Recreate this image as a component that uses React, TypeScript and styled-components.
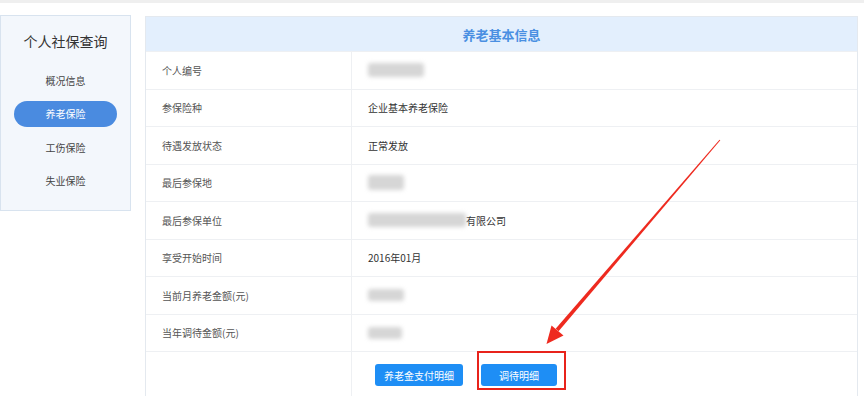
import React from "react";
import styled, { createGlobalStyle } from "styled-components";

const GlobalStyle = createGlobalStyle`
  html, body {
    margin: 0;
    padding: 0;
    background: #ffffff;
    font-family: "Noto Sans CJK SC", "Noto Sans", sans-serif;
    overflow: hidden;
  }
`;

interface IRow {
  label: string;
  value?: string;
  blur?: number;
  blurHeight?: number;
  suffix?: string;
}

const rows: IRow[] = [
  { label: "个人编号", blur: 56, blurHeight: 14 },
  { label: "参保险种", value: "企业基本养老保险" },
  { label: "待遇发放状态", value: "正常发放" },
  { label: "最后参保地", blur: 36, blurHeight: 15 },
  { label: "最后参保单位", blur: 98, blurHeight: 14, suffix: "有限公司" },
  { label: "享受开始时间", value: "2016年01月" },
  { label: "当前月养老金额(元)", blur: 36, blurHeight: 12 },
  { label: "当年调待金额(元)", blur: 34, blurHeight: 12 },
];

const menu = ["概况信息", "养老保险", "工伤保险", "失业保险"];

const App = () => {
  return (
    <>
      <GlobalStyle />
      <TopStrip />
      <Page>
        <Sidebar>
          <SideTitle>个人社保查询</SideTitle>
          <MenuList>
            {menu.map((m) => (
              <MenuItem key={m} $active={m === "养老保险"}>
                {m}
              </MenuItem>
            ))}
          </MenuList>
        </Sidebar>
        <Panel>
          <PanelHeader>养老基本信息</PanelHeader>
          {rows.map((r) => (
            <Row key={r.label}>
              <LabelCell>{r.label}</LabelCell>
              <ValueCell>
                {r.blur && <Blurred $w={r.blur} $h={r.blurHeight || 12} />}
                {r.value}
                {r.suffix}
              </ValueCell>
            </Row>
          ))}
          <ButtonRow>
            <LabelCell />
            <Buttons>
              <Button>养老金支付明细</Button>
              <Highlight>
                <Button $narrow>调待明细</Button>
              </Highlight>
            </Buttons>
          </ButtonRow>
        </Panel>
      </Page>
      <Annotation width="864" height="396" viewBox="0 0 864 396">
        <polygon points="720.3,140.3 719.5,139.7 555.6,328.7 558.6,331.3" fill="#ee2a1f" />
        <polygon points="546.5,344 563.5,335.5 551.5,325.5" fill="#ee2a1f" />
      </Annotation>
    </>
  );
};

export default App;

const TopStrip = styled.div`
  height: 3px;
  background: #efefef;
`;

const Page = styled.div`
  display: flex;
  align-items: flex-start;
  gap: 14px;
  padding-top: 12px;
`;

const Sidebar = styled.div`
  width: 129px;
  height: 194px;
  background: #f3f7fc;
  border: 1px solid #d8e3ef;
  display: flex;
  flex-direction: column;
  align-items: center;
`;

const SideTitle = styled.div`
  margin-top: 15px;
  font-size: 14px;
  line-height: 20px;
  color: #333;
`;

const MenuList = styled.div`
  margin-top: 16px;
  display: flex;
  flex-direction: column;
  gap: 7.5px;
`;

const MenuItem = styled.div<{ $active?: boolean }>`
  width: 103px;
  height: 26px;
  border-radius: 13px;
  display: flex;
  align-items: center;
  justify-content: center;
  font-size: 10px;
  color: ${(p) => (p.$active ? "#ffffff" : "#444")};
  background: ${(p) => (p.$active ? "#4a8be0" : "transparent")};
`;

const Panel = styled.div`
  width: 711px;
  margin-top: 1px;
  border: 1px solid #e4e9ef;
  border-bottom: none;
`;

const PanelHeader = styled.div`
  height: 34px;
  background: #e3effd;
  display: flex;
  align-items: center;
  justify-content: center;
  font-size: 13px;
  font-weight: 700;
  color: #4a8fe2;
`;

const Row = styled.div`
  display: grid;
  grid-template-columns: 206px 1fr;
  height: 37.5px;
  border-top: 1px solid #eef0f3;
  box-sizing: border-box;
  font-size: 10px;
`;

const LabelCell = styled.div`
  display: flex;
  align-items: center;
  padding-left: 16px;
  color: #555;
  border-right: 1px solid #eef0f3;
`;

const ValueCell = styled.div`
  display: flex;
  align-items: center;
  padding-left: 16px;
  color: #333;
`;

const Blurred = styled.span<{ $w: number; $h: number }>`
  display: inline-block;
  width: ${(p) => p.$w}px;
  height: ${(p) => p.$h}px;
  background: #d6d6d6;
  border-radius: 3px;
  filter: blur(2px);
`;

const ButtonRow = styled.div`
  display: grid;
  grid-template-columns: 206px 1fr;
  height: 50px;
  border-top: 1px solid #eef0f3;
`;

const Buttons = styled.div`
  display: flex;
  align-items: flex-start;
  gap: 14px;
  padding: 12px 0 0 23px;
`;

const Button = styled.button<{ $narrow?: boolean }>`
  width: ${(p) => (p.$narrow ? 76 : 88)}px;
  height: 22px;
  border: none;
  border-radius: 3px;
  background: #1e8ef5;
  color: #ffffff;
  font-family: inherit;
  font-size: 10px;
  padding: 0;
`;

const Highlight = styled.span`
  display: inline-flex;
  margin-top: -13px;
  padding: 11px 7px 2px 2px;
  border: 2px solid #e8231b;
`;

const Annotation = styled.svg`
  position: absolute;
  top: 0;
  left: 0;
  pointer-events: none;
`;
